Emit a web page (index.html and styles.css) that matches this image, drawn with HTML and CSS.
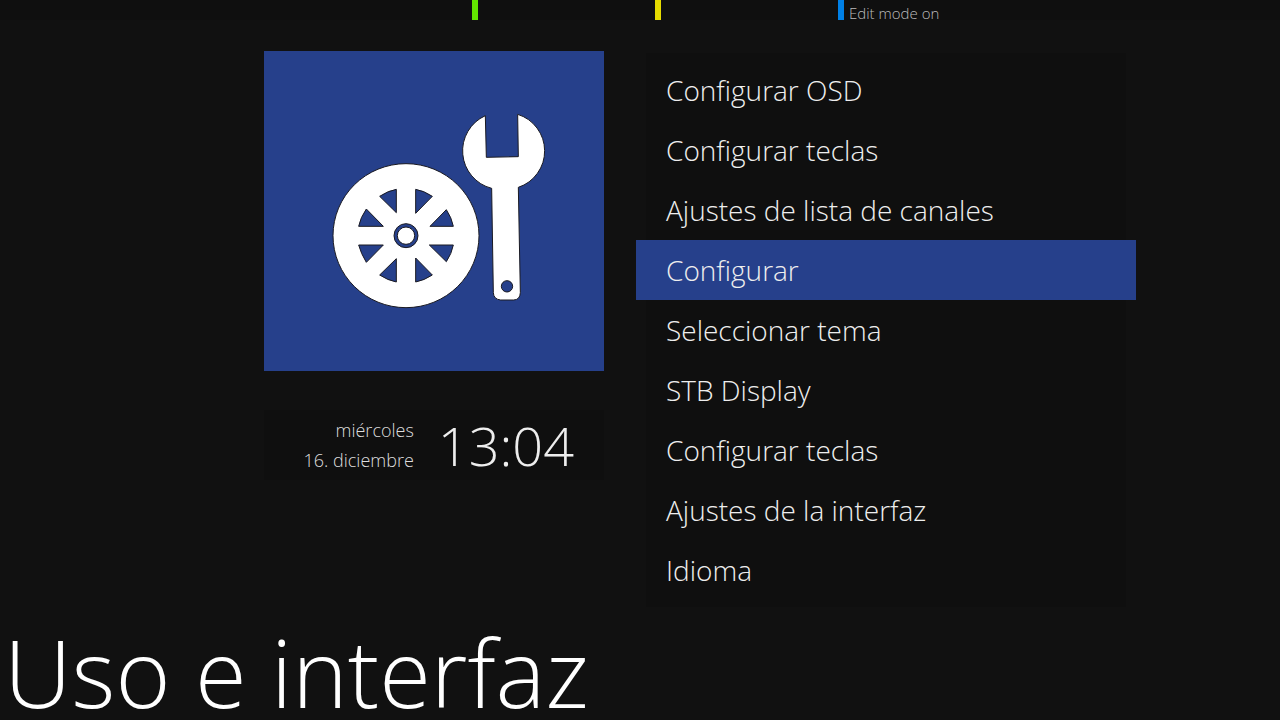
FILE: index.html
```
<!DOCTYPE html>
<html lang="es">
<head>
    <meta charset="UTF-8">
    <meta name="viewport" content="width=device-width, initial-scale=1.0">
    <title>Uso e interfaz</title>
    <link rel="stylesheet" href="styles.css">
</head>
<body>
    <header class="keys">
        <button class="key green" aria-label="Verde"></button>
        <button class="key yellow" aria-label="Amarillo"></button>
        <button class="key blue">Edit mode on</button>
    </header>

    <main class="content">
        <section class="side">
            <div class="tile">
                <svg class="tile-icon" viewBox="-168 -147 1020 960" aria-hidden="true">
                    <!-- Rueda -->
                    <g transform="translate(258 407)">
                        <ellipse class="shape" rx="219" ry="216"/>
                        <g class="hole">
                            <path d="M29 -139 Q55 -134 79 -118 L29 -67 Z"/>
                            <path d="M121 -78 Q137 -54 142 -28 H72 Z"/>
                            <path d="M-29 -139 Q-55 -134 -79 -118 L-29 -69 Z"/>
                            <path d="M-119 -80 Q-137 -54 -142 -28 H-68 Z"/>
                            <path d="M29 139 Q55 134 79 118 L29 67 Z"/>
                            <path d="M121 78 Q137 54 142 28 H70 Z"/>
                            <path d="M-29 139 Q-55 134 -79 118 L-29 69 Z"/>
                            <path d="M-119 80 Q-135 54 -142 28 H-68 Z"/>
                        </g>
                        <circle class="hole" r="36"/>
                        <circle class="shape" r="26"/>
                    </g>
                    <!-- Llave -->
                    <path class="shape" d="M496 47 L499 172 L595 170 L593 43 A115 115 0 0 1 595 262 L601 578 Q600 600 580 600 H542 Q521 598 520 578 L515 265 A116 116 0 0 1 496 47 Z"/>
                    <circle class="hole" cx="561" cy="559" r="17"/>
                </svg>
            </div>
            <div class="clock">
                <div class="date">
                    <div>miércoles</div>
                    <div>16. diciembre</div>
                </div>
                <time class="time">13:04</time>
            </div>
        </section>

        <nav class="menu">
            <button class="item">Configurar OSD</button>
            <button class="item">Configurar teclas</button>
            <button class="item">Ajustes de lista de canales</button>
            <button class="item selected" aria-current="true">Configurar</button>
            <button class="item">Seleccionar tema</button>
            <button class="item">STB Display</button>
            <button class="item">Configurar teclas</button>
            <button class="item">Ajustes de la interfaz</button>
            <button class="item">Idioma</button>
        </nav>
    </main>

    <h1 class="title">Uso e interfaz</h1>
</body>
</html>
```
FILE: styles.css
```
* {
    box-sizing: border-box;
}

body {
    margin: 0;
    min-height: 100vh;
    display: flex;
    flex-direction: column;
    background-color: #111;
    color: #eee;
    font-family: "Open Sans", "Noto Sans", sans-serif;
    font-weight: 300;
}

button {
    border: none;
    background: none;
    color: inherit;
    font: inherit;
    text-align: left;
    cursor: pointer;
}

/* Teclas de color */
.keys {
    display: grid;
    grid-template-columns: repeat(4, 183px);
    justify-content: center;
    padding-left: 30px;
    background-color: #0f0f0f;
}

.key {
    height: 20px;
    padding: 3px 0 0 5px;
    border-left: 6px solid;
    font-size: 15px;
    line-height: 20px;
}

.green {
    grid-column-start: 2;
    border-color: #62e600;
}

.yellow {
    border-color: #e6dc00;
}

.blue {
    border-color: #0080e6;
    color: #bbb;
}

.content {
    display: flex;
    justify-content: center;
    align-items: flex-start;
    gap: 42px;
    padding: 31px 10px 0 120px;
}

.side {
    width: 340px;
}

.tile {
    background-color: #26408b;
}

.tile-icon {
    display: block;
    width: 100%;
}

.shape {
    fill: #fff;
    stroke: #1a1a22;
    stroke-width: 3;
}

.hole {
    fill: #26408b;
    stroke: #1a1a22;
    stroke-width: 3;
}

.clock {
    display: flex;
    align-items: center;
    justify-content: flex-end;
    gap: 24px;
    height: 70px;
    margin-top: 39px;
    padding-right: 30px;
    background-color: #0f0f0f;
}

.date {
    font-size: 18px;
    line-height: 30px;
    text-align: right;
    color: #ddd;
}

.time {
    font-size: 54px;
    line-height: 70px;
}

/* Lista de opciones */
.menu {
    width: 480px;
    margin-top: 2px;
    padding: 7px 0;
    background-color: #0f0f0f;
}

.item {
    display: block;
    width: 100%;
    height: 60px;
    padding: 0 20px;
    font-size: 28px;
    line-height: 60px;
}

.selected {
    width: 500px;
    margin: 0 -10px;
    padding: 0 30px;
    background-color: #26408b;
}

.title {
    margin: auto 0 0;
    padding: 0 4px;
    color: #fff;
    font-size: 94px;
    font-weight: 300;
    line-height: 96px;
}
```
